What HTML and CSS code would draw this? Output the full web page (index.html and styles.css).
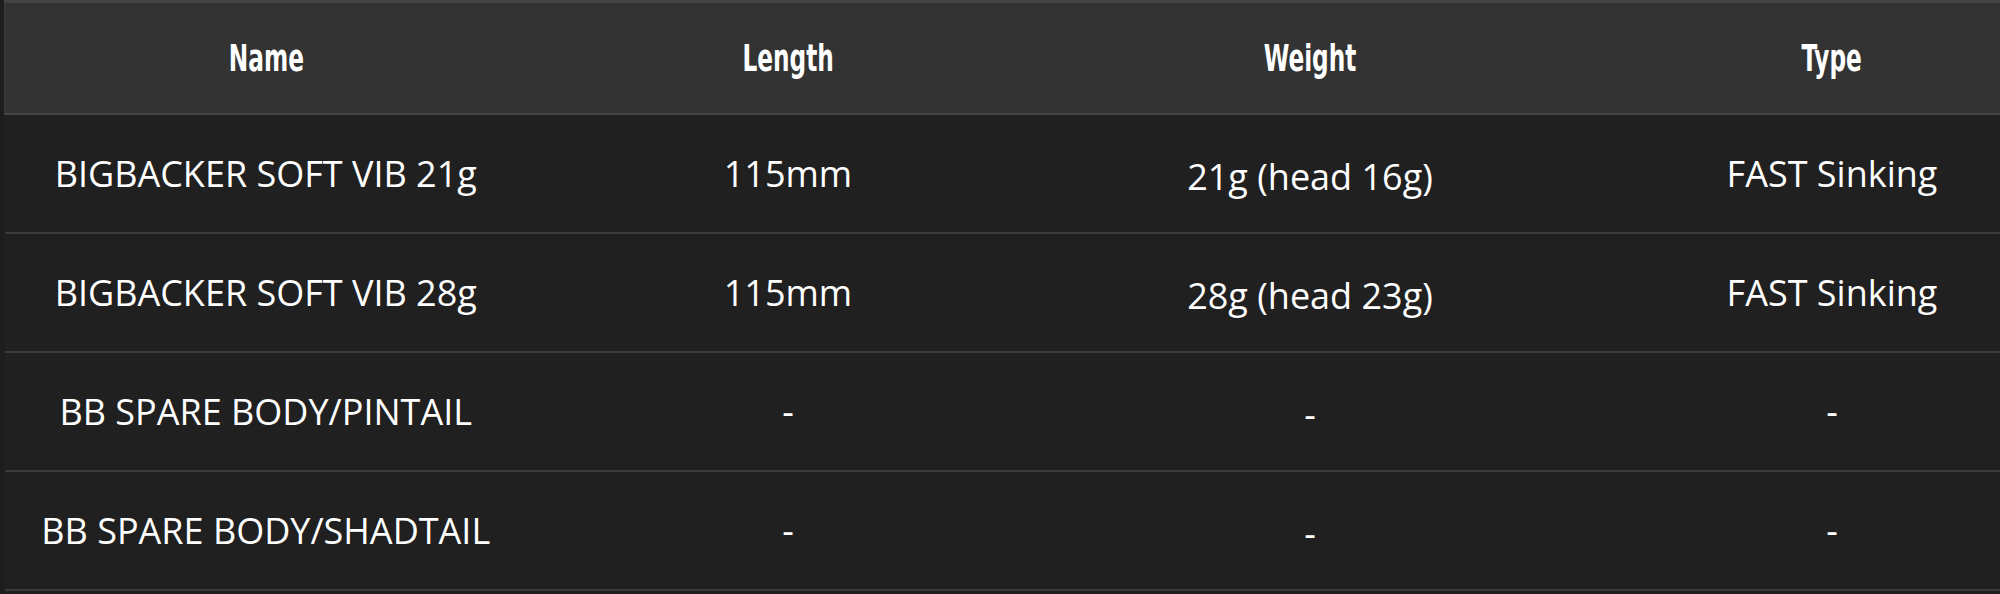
FILE: index.html
```html
<!DOCTYPE html>
<html>
<head>
<meta charset="utf-8">
<link rel="stylesheet" href="styles.css">
</head>
<body>
<div class="wrap">
  <table class="spec">
    <thead>
      <tr>
        <th><span class="hd">Name</span></th>
        <th><span class="hd">Length</span></th>
        <th><span class="hd">Weight</span></th>
        <th><span class="hd">Type</span></th>
      </tr>
    </thead>
    <tbody>
      <tr>
        <td>BIGBACKER SOFT VIB 21g</td>
        <td>115mm</td>
        <td><span class="w">21g (head 16g)</span></td>
        <td>FAST Sinking</td>
      </tr>
      <tr>
        <td>BIGBACKER SOFT VIB 28g</td>
        <td>115mm</td>
        <td><span class="w">28g (head 23g)</span></td>
        <td>FAST Sinking</td>
      </tr>
      <tr>
        <td>BB SPARE BODY/PINTAIL</td>
        <td>-</td>
        <td><span class="w">-</span></td>
        <td>-</td>
      </tr>
      <tr>
        <td>BB SPARE BODY/SHADTAIL</td>
        <td>-</td>
        <td><span class="w">-</span></td>
        <td>-</td>
      </tr>
    </tbody>
  </table>
</div>
</body>
</html>
```

FILE: styles.css
```css
html, body {
  margin: 0;
  padding: 0;
  background: #1e1e1e;
  overflow: hidden;
}

.wrap {
  padding-left: 4px;
  width: 2088px;
}

.spec {
  width: 2088px;
  table-layout: fixed;
  border-collapse: collapse;
  color: #ffffff;
}

.spec th {
  width: 522px;
  height: 110px;
  padding: 0;
  background: #333333;
  border-top: 3px solid #444444;
  border-bottom: 2px solid #464646;
  text-align: center;
  vertical-align: middle;
  font-family: "DejaVu Sans Condensed", "DejaVu Sans", sans-serif;
  font-weight: bold;
  font-size: 34px;
}

.spec th:first-child {
  border-left: 1px solid #3c3c3c;
}

.hd {
  display: inline-block;
  transform: scale(0.76, 1.1);
}

.spec td {
  height: 117px;
  padding: 0;
  background: #202020;
  border-bottom: 2px solid #3a3a3a;
  text-align: center;
  vertical-align: middle;
  font-family: "Open Sans", "Noto Sans", sans-serif;
  font-size: 36px;
  font-weight: 400;
}

.w {
  display: inline-block;
  transform: translateY(3px);
}
```
